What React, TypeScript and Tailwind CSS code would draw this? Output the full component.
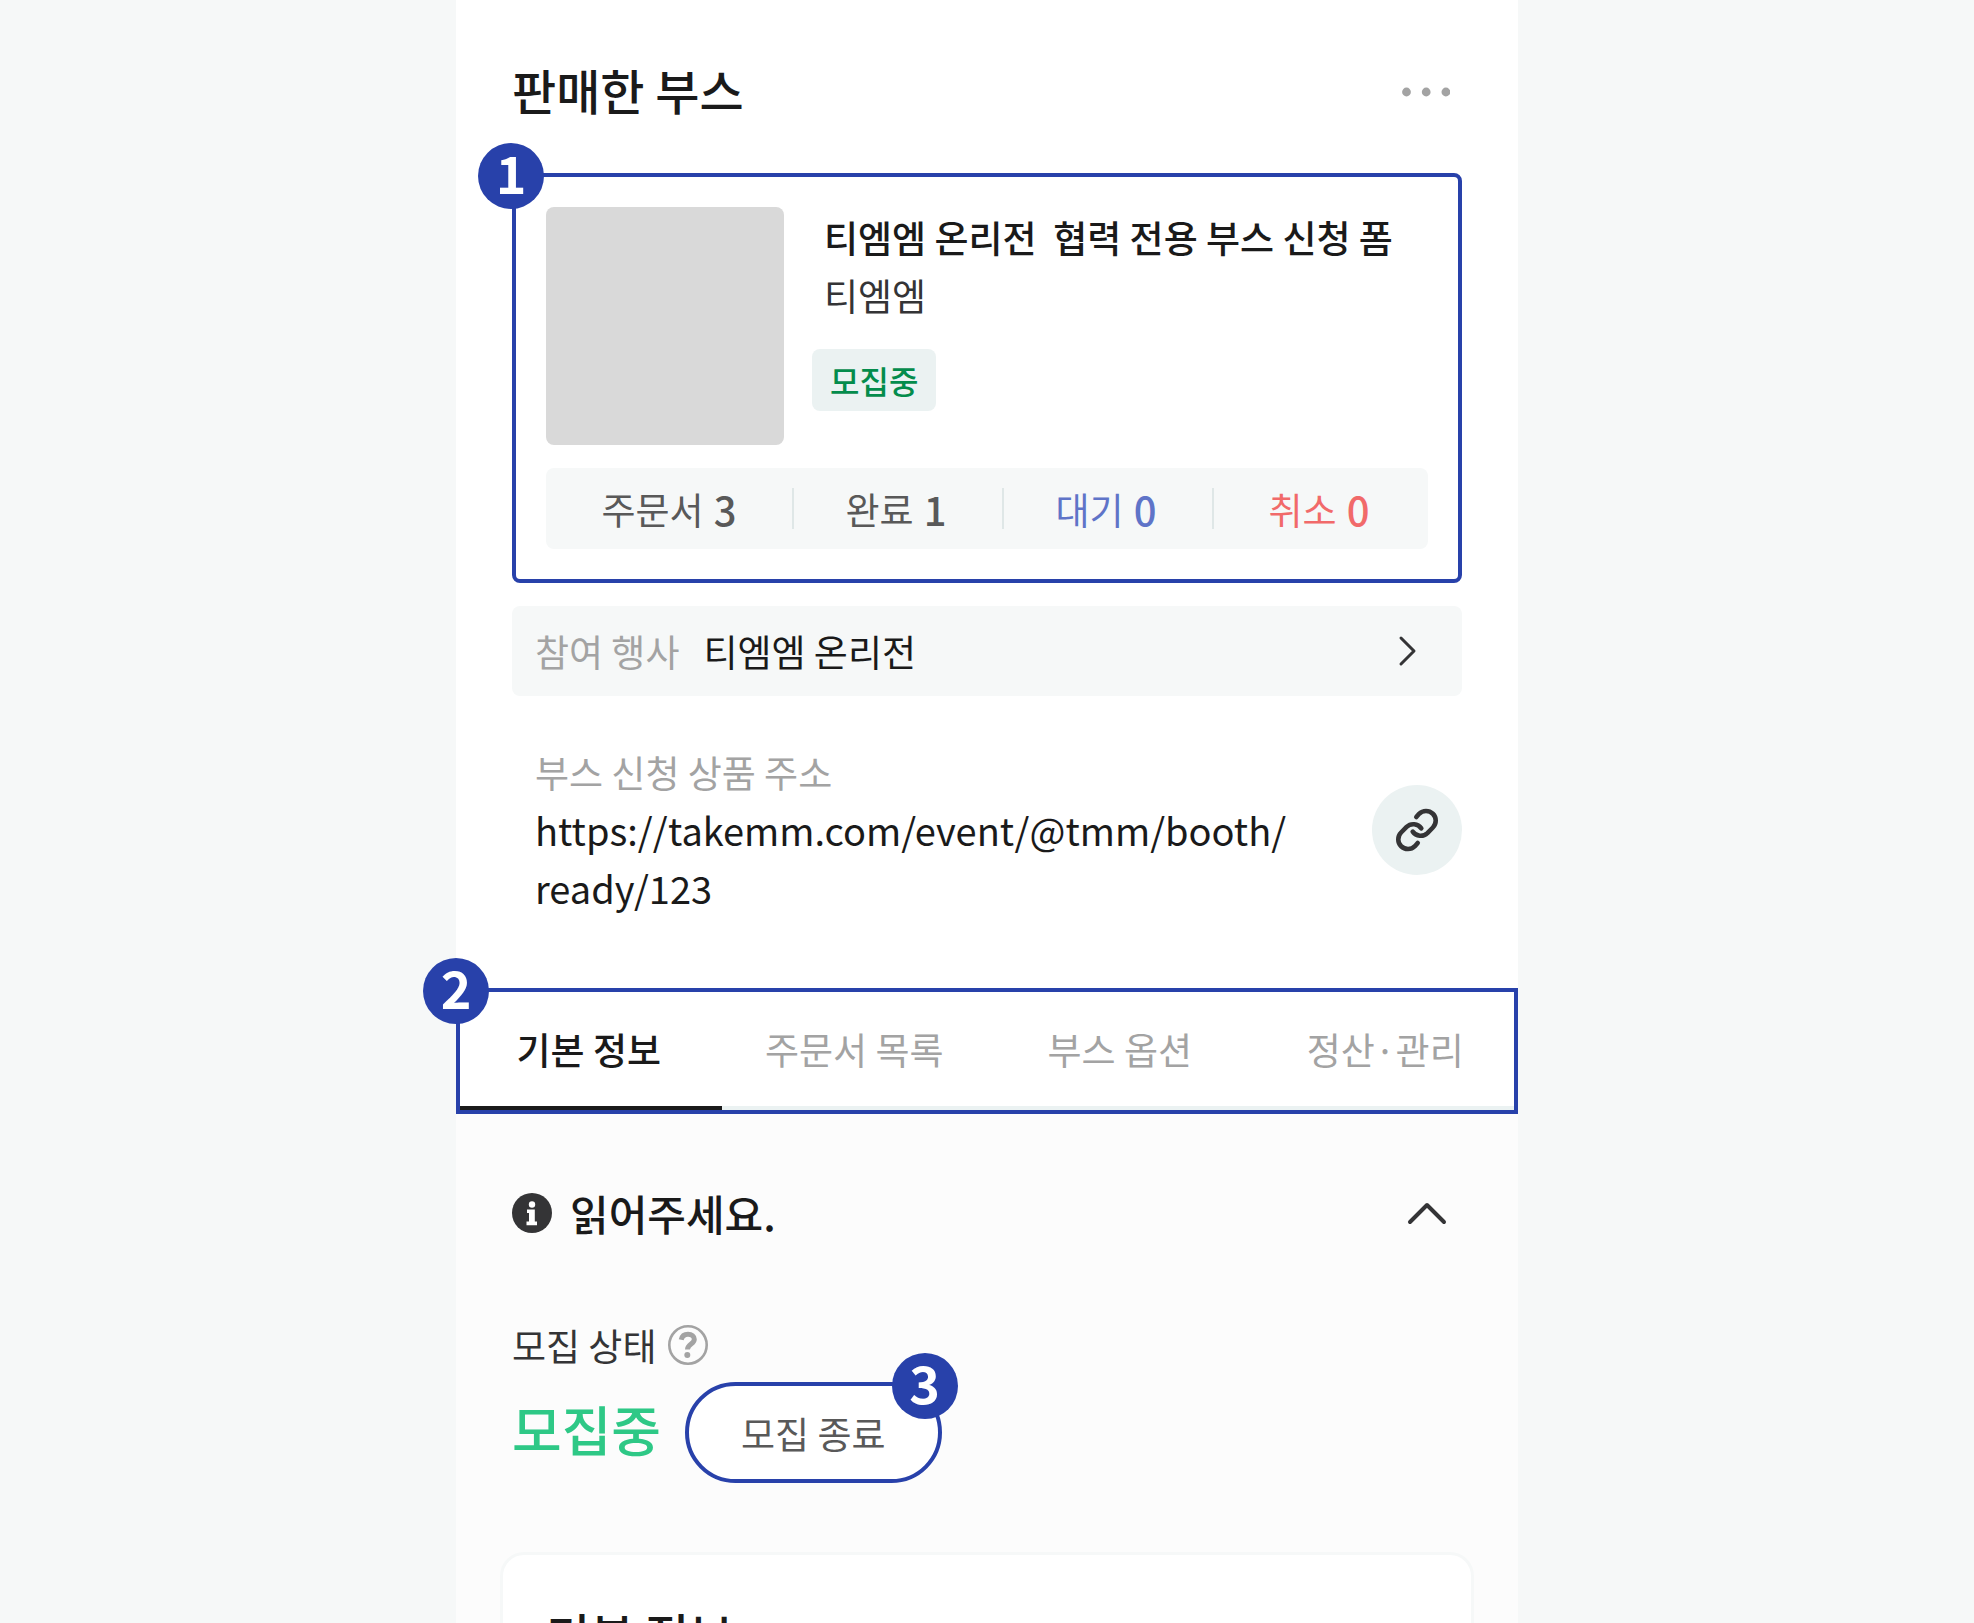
import { useState } from 'react'

interface Stat {
  label: string
  count: number
  color: string
}

const STATS: Stat[] = [
  { label: '주문서', count: 3, color: 'text-[#595959]' },
  { label: '완료', count: 1, color: 'text-[#595959]' },
  { label: '대기', count: 0, color: 'text-[#5f74c8]' },
  { label: '취소', count: 0, color: 'text-[#f16a6a]' },
]

const TABS = ['기본 정보', '주문서 목록', '부스 옵션', '정산·관리']

// Numbered marker sitting on a highlighted area
function Marker({ number, className }: { number: number; className: string }) {
  return (
    <span
      className={`absolute z-10 flex size-[66px] items-center justify-center rounded-full bg-[#2841aa] pb-2 text-[52px] leading-none font-bold text-white ${className}`}
    >
      {number}
    </span>
  )
}

function LinkIcon() {
  return (
    <svg className="size-[50px]" viewBox="25 25 50 50" fill="none" stroke="#343436" strokeWidth="4.6" strokeLinecap="round" strokeLinejoin="round">
      <path d="M49.3 37L52.1 33.8A9.7 9.7 0 0 1 65.9 47.5L60.4 53.1A9.7 9.7 0 0 1 45.7 51.6" />
      <path d="M49.3 37L52.1 33.8A9.7 9.7 0 0 1 65.9 47.5L60.4 53.1A9.7 9.7 0 0 1 45.7 51.6" transform="rotate(180 50 50)" />
    </svg>
  )
}

function InfoIcon() {
  return (
    <svg className="size-10 shrink-0" viewBox="0 0 40 40">
      <circle cx="20" cy="20" r="20" fill="#343436" />
      <circle cx="20" cy="11.5" r="3.2" fill="#fff" />
      <path d="M15 16.5h7.800V28.500h2.200v3.800H14.500v-3.800h2.500V20H15z" fill="#fff" />
    </svg>
  )
}

function HelpIcon() {
  return (
    <svg className="size-10" viewBox="0 0 40 40" fill="none" stroke="#a3a3a3">
      <circle cx="20" cy="20" r="18.7" strokeWidth="2.6" />
      <path d="M13.2 14.8c.8-3.700 3.600-5.500 6.800-5.500 3.800 0 6.300 2 6.300 5 0 4.800-6.600 4.800-6.800 10.200" strokeWidth="5" />
      <circle cx="19.3" cy="30" r="3" fill="#a3a3a3" stroke="none" />
    </svg>
  )
}

export default function App() {
  const [activeTab, setActiveTab] = useState(0)
  const [isOpen, setIsOpen] = useState(true)

  return (
    <div className="h-screen overflow-hidden bg-[#f6f8f8] font-['Noto_Sans_CJK_KR',sans-serif] text-[37px] leading-[58px] text-[#1a1a1a]">
      <main className="mx-auto min-h-full w-full max-w-[1062px] bg-[#fcfcfc]">
        <div className="bg-white px-14 pt-[53px]">
          <header className="flex items-center justify-between">
            <h1 className="text-[48px] leading-[72px] font-medium">판매한 부스</h1>
            <button type="button" aria-label="더보기" className="mr-2 p-1">
              <svg className="h-4 w-12" viewBox="0 0 48 16" fill="#a3a3a3">
                <circle cx="4.5" cy="11" r="4.4" />
                <circle cx="24.2" cy="11" r="4.4" />
                <circle cx="43.9" cy="11" r="4.4" />
              </svg>
            </button>
          </header>

          {/* 부스 요약 */}
          <section className="relative mt-12 rounded-lg border-4 border-[#2841aa] p-[30px]">
            <Marker number={1} className="-top-[34px] -left-[38px]" />
            <div className="flex gap-7">
              <div className="size-[238px] shrink-0 rounded-lg bg-[#d9d9d9]" />
              <div className="min-w-0 pt-px">
                <h2 className="pl-3 font-medium whitespace-pre">티엠엠 온리전  협력 전용 부스 신청 폼</h2>
                <p className="pl-3 text-[#343436]">티엠엠</p>
                <span className="mt-[25px] inline-block rounded-lg bg-[#ebf2f2] px-[18px] text-[32px] leading-[62px] font-medium text-[#048c4c]">
                  모집중
                </span>
              </div>
            </div>
            <ul className="mt-[23px] grid grid-cols-[246fr_210fr_210fr_216fr] rounded-lg bg-[#f6f8f8] py-5">
              {STATS.map((stat, i) => (
                <li
                  key={stat.label}
                  className={`flex h-[41px] items-center justify-center gap-[10px] ${stat.color} ${i > 0 ? 'border-l-2 border-[#dfe7e7] pr-1' : ''}`}
                >
                  <span>{stat.label}</span>
                  <span className="text-[40px] font-medium">{stat.count}</span>
                </li>
              ))}
            </ul>
          </section>

          {/* 참여 행사 */}
          <a href="#event" className="mt-[23px] flex h-[90px] items-center rounded-lg bg-[#f6f8f8] pr-11 pl-[23px]">
            <span className="text-[#a3a3a3]">참여 행사</span>
            <span className="ml-6">티엠엠 온리전</span>
            <svg className="ml-auto h-8 w-5" viewBox="0 0 20 32" fill="none" stroke="#343436" strokeWidth="3" strokeLinecap="round" strokeLinejoin="round">
              <path d="M3 3l13 13L3 29" />
            </svg>
          </a>

          <div className="flex items-center justify-between pt-[47px] pb-[71px] pl-[23px]">
            <div>
              <p className="text-[#a3a3a3]">부스 신청 상품 주소</p>
              <p className="text-[38px]">
                https://takemm.com/event/@tmm/booth/
                <br />
                ready/123
              </p>
            </div>
            <button type="button" aria-label="주소 복사" className="flex size-[90px] shrink-0 items-center justify-center rounded-full bg-[#ebf2f2]">
              <LinkIcon />
            </button>
          </div>
        </div>

        {/* 탭 메뉴 */}
        <div className="relative bg-white">
          <div className="pointer-events-none absolute inset-0 border-4 border-[#2841aa]" />
          <Marker number={2} className="-top-[30px] -left-[33px]" />
          <div role="tablist" className="grid grid-cols-4 py-1">
            {TABS.map((tab, i) => (
              <button
                key={tab}
                type="button"
                role="tab"
                aria-selected={activeTab === i}
                onClick={() => setActiveTab(i)}
                className={`h-[118px] border-b-4 ${activeTab === i ? 'border-[#1a1a1a] font-medium' : 'border-[#ebf2f2] text-[#a3a3a3]'}`}
              >
                {tab}
              </button>
            ))}
          </div>
        </div>

        <div className="px-14 pt-[68px]">
          <button type="button" onClick={() => setIsOpen(!isOpen)} aria-expanded={isOpen} className="flex w-full items-center pr-[15px]">
            <InfoIcon />
            <span className="ml-[18px] text-[42px] leading-[62px] font-medium">읽어주세요.</span>
            <svg className={`ml-auto h-6 w-10 ${isOpen ? '' : 'rotate-180'}`} viewBox="0 0 40 24" fill="none" stroke="#343436" strokeWidth="4" strokeLinecap="round" strokeLinejoin="round">
              <path d="M3 21L20 4l17 17" />
            </svg>
          </button>

          <div className="mt-[72px] flex items-center gap-3">
            <span className="text-[#343436]">모집 상태</span>
            <button type="button" aria-label="도움말">
              <HelpIcon />
            </button>
          </div>
          <div className="mt-2 flex items-center gap-6">
            <strong className="pb-2 text-[54px] font-medium text-[#2ec886]">모집중</strong>
            <div className="relative">
              <button type="button" className="h-[101px] rounded-full border-4 border-[#2841aa] bg-white px-[52px] text-[#595959]">
                모집 종료
              </button>
              <Marker number={3} className="-top-[29px] -right-4" />
            </div>
          </div>
        </div>

        <section className="mx-11 mt-[69px] rounded-3xl border-[3px] border-[#f6f8f8] bg-white px-[43px] py-11">
          <h2 className="text-[48px] leading-[68px] font-medium">기본 정보</h2>
        </section>
      </main>
    </div>
  )
}
